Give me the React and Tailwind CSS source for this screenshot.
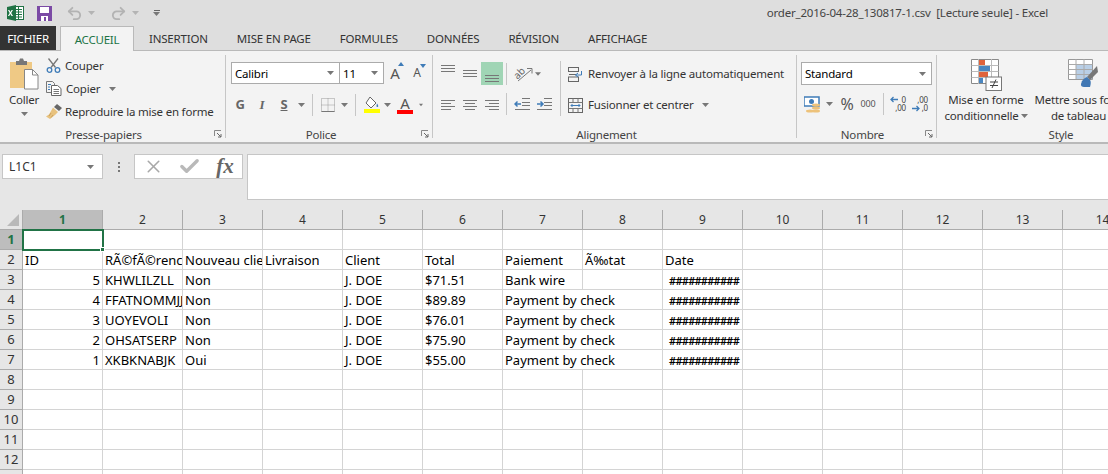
import { Undo2, Redo2, Check, X } from "lucide-react";

const tabs = ["INSERTION", "MISE EN PAGE", "FORMULES", "DONNÉES", "RÉVISION", "AFFICHAGE"];
const colNums = [1, 2, 3, 4, 5, 6, 7, 8, 9, 10, 11, 12, 13, 14];

const hash = "###########";
// [text, align, span]
const rows = {
	2: [["ID"], ["RÃ©fÃ©rence"], ["Nouveau client"], ["Livraison"], ["Client"], ["Total"], ["Paiement"], ["Ã‰tat"], ["Date"]],
	3: [["5", "r"], ["KHWLILZLL"], ["Non"], [""], ["J. DOE"], ["$71.51"], ["Bank wire"], [""], [hash, "h"]],
	4: [["4", "r"], ["FFATNOMMJJ"], ["Non"], [""], ["J. DOE"], ["$89.89"], ["Payment by check", "", 2], [hash, "h"]],
	5: [["3", "r"], ["UOYEVOLI"], ["Non"], [""], ["J. DOE"], ["$76.01"], ["Payment by check", "", 2], [hash, "h"]],
	6: [["2", "r"], ["OHSATSERP"], ["Non"], [""], ["J. DOE"], ["$75.90"], ["Payment by check", "", 2], [hash, "h"]],
	7: [["1", "r"], ["XKBKNABJK"], ["Oui"], [""], ["J. DOE"], ["$55.00"], ["Payment by check", "", 2], [hash, "h"]],
};

const Caret = ({ className = "" }) => (
	<svg width="7" height="4" viewBox="0 0 7 4" className={className}>
		<path d="M0 0h7L3.5 4z" fill="#777" />
	</svg>
);

const Launcher = () => (
	<svg width="8" height="8" viewBox="0 0 8 8" className="absolute right-[3px] bottom-[4px]">
		<path d="M.5 6V.5H7" fill="none" stroke="#888" />
		<path d="M3 3l4 4M7 4v3H4" fill="none" stroke="#666" />
	</svg>
);

const Sep = () => <div className="w-px bg-[#c6c6c6] my-[4px] shrink-0" />;
const MiniSep = () => <div className="w-px h-[22px] bg-[#c6c6c6] shrink-0" />;

const Slot = ({ w, children, className = "" }) => (
	<div className={`flex items-center justify-center shrink-0 ${className}`} style={{ width: w }}>
		{children}
	</div>
);

const Group = ({ width, label, labelClass = "", launcher, children }) => (
	<div className="relative flex flex-col shrink-0 h-full" style={{ width }}>
		<div className="flex-1 min-h-0">{children}</div>
		<div className={`h-[14px] flex items-center justify-center text-[#444] ${labelClass}`}>{label}</div>
		{launcher && <Launcher />}
	</div>
);

const Lines = ({ ys, x1 = 0, x2 = 14, h = 14 }) => (
	<svg width="14" height={h} viewBox={`0 0 14 ${h}`}>
		{ys.map((y, i) => (
			<path key={i} d={`M${Array.isArray(x1) ? x1[i] : x1} ${y + 0.5}H${Array.isArray(x2) ? x2[i] : x2}`} stroke="#777" />
		))}
	</svg>
);

const ExcelLogo = () => (
	<svg width="17" height="16" viewBox="0 0 17 16">
		<rect x="6" y="1.5" width="10.5" height="13" fill="#fff" stroke="#207245" />
		<path d="M9 4.5h6M9 7h6M9 9.5h6M9 12h6M11.5 2v12" stroke="#207245" />
		<path d="M0 2l9-2v16l-9-2z" fill="#207245" />
		<path d="M2.3 5l1.2 2 1.1-2h1.3L4.2 8l1.8 3H4.6L3.4 9l-1.2 2H.9l1.8-3L1 5z" fill="#fff" />
	</svg>
);

const SaveIcon = () => (
	<svg width="15" height="15" viewBox="0 0 15 15">
		<path d="M0 0h15v15H0z" fill="#7b4aa5" />
		<rect x="3" y="1" width="9" height="6" fill="#fff" />
		<rect x="4" y="10" width="7" height="5" fill="#fff" />
		<rect x="7" y="11" width="2" height="4" fill="#7b4aa5" />
	</svg>
);

const PasteIcon = () => (
	<svg width="29" height="32" viewBox="0 0 29 32">
		<path d="M0 4h22v26H0z" fill="#efc985" />
		<path d="M6 3h3l1-2.500h3l1 2.500h3v4H6z" fill="#777" />
		<path d="M14.500 11.500h8l5.500 5.500v14h-13.500z" fill="#fff" stroke="#888" />
		<path d="M22.500 11.500v5.500h5.500" fill="none" stroke="#888" />
	</svg>
);

const ScissorsIcon = () => (
	<svg width="15" height="15" viewBox="0 0 15 15" fill="none">
		<path d="M2.500 .5l7 9M12 .5l-7 9" stroke="#777" strokeWidth="1.300" />
		<circle cx="3.500" cy="12" r="2.300" stroke="#3f7cb8" strokeWidth="1.300" />
		<circle cx="11.500" cy="12" r="2.300" stroke="#3f7cb8" strokeWidth="1.300" />
	</svg>
);

const CopyIcon = () => (
	<svg width="16" height="15" viewBox="0 0 16 15" fill="none">
		<path d="M.5.5h6l2 2v9H.5z" fill="#f3f3f3" stroke="#777" />
		<path d="M5.500 4.500h6l3.500 3v7H5.500z" fill="#fff" stroke="#666" />
		<path d="M2 3.500h3M2 6h2M2 8.500h2" stroke="#3f7cb8" />
		<path d="M7.500 8.500h5.500M7.500 10.500h5.500M7.500 12.500h5.500" stroke="#777" />
	</svg>
);

const BrushIcon = () => (
	<svg width="16" height="15" viewBox="0 0 16 15">
		<path d="M11 0l5 4-3 3-5-4z" fill="#666" />
		<path d="M7 3.500l5 4.500-3 3-5 4-4-2.500 3-2z" fill="#e8c27e" />
		<path d="M5 9l-2 3M7 11l-2 2.500" stroke="#c9a25f" fill="none" />
	</svg>
);

const WrapIcon = () => (
	<svg width="15" height="15" viewBox="0 0 15 15" fill="none">
		<rect x=".5" y=".5" width="10" height="4" stroke="#666" />
		<rect x=".5" y="10" width="10" height="4.500" stroke="#666" />
		<path d="M1 7.500h7" stroke="#666" />
		<path d="M13.500 4v4h-6M10 6l-2.500 2 2.500 2" stroke="#3f7cb8" />
	</svg>
);

const MergeIcon = () => (
	<svg width="15" height="15" viewBox="0 0 15 15" fill="none">
		<rect x=".5" y=".5" width="14" height="14" stroke="#666" />
		<path d="M.5 4.500h14M.5 10.500h14M5 .5v4M10 .5v4M5 10.500v4M10 10.500v4" stroke="#777" />
		<path d="M3 7.500h9M4.500 6l-1.500 1.500L4.500 9M10.500 6L12 7.500 10.500 9" stroke="#3f7cb8" />
	</svg>
);

const OrientIcon = () => (
	<svg width="21" height="16" viewBox="0 0 21 16" fill="none">
		<text x="1" y="11" fontSize="10" fill="#666" transform="rotate(-45 6 8)">ab</text>
		<path d="M5 15l13-11" stroke="#777" />
		<path d="M14 2.500h5v5" stroke="#777" />
	</svg>
);

const IndentIcon = ({ flip }) => (
	<svg width="16" height="12" viewBox="0 0 16 12" fill="none">
		<path d="M8 .5h8M8 4.500h8M8 7.500h8M1 11.500h15" stroke="#777" />
		<path d={flip ? "M1 6h6M4.500 3.500L7 6 4.500 8.500" : "M1 6h6M3.500 3.500L1 6l2.500 2.500"} stroke="#3f7cb8" strokeWidth="1.500" />
	</svg>
);

const BorderIcon = () => (
	<svg width="14" height="14" viewBox="0 0 14 14" fill="none">
		<rect x=".5" y=".5" width="13" height="13" stroke="#999" strokeDasharray="1 1" />
		<path d="M7 .5v13M.5 7h13" stroke="#999" strokeDasharray="1 1" />
		<path d="M.5 13.500h13" stroke="#777" />
	</svg>
);

const FillIcon = () => (
	<svg width="16" height="17" viewBox="0 0 16 17" fill="none">
		<path d="M6 1l6 6-5 5-5-5z" fill="#fff" stroke="#666" />
		<path d="M13 7.500c1 1.500 2 3 .5 3.500s-1-2-.5-3.500z" fill="#3f7cb8" />
		<rect x="0" y="13" width="16" height="4" fill="#ffff00" />
	</svg>
);

const MoneyIcon = () => (
	<svg width="17" height="17" viewBox="0 0 17 17">
		<rect x="0" y="1" width="15" height="9" fill="#fff" stroke="#3f7cb8" strokeWidth="1.500" />
		<circle cx="7.500" cy="5.500" r="2.500" fill="#3f7cb8" />
		<ellipse cx="12" cy="9" rx="4" ry="1.500" fill="#edc27a" />
		<ellipse cx="12" cy="12" rx="4" ry="1.500" fill="#edc27a" />
		<ellipse cx="6" cy="15" rx="4" ry="1.500" fill="#edc27a" />
		<ellipse cx="12" cy="15" rx="4" ry="1.500" fill="#edc27a" />
	</svg>
);

const DecimalBtn = ({ up }) => (
	<div className="relative w-[16px] h-[16px] text-[8px] leading-[8px] text-[#444]">
		<span className="absolute top-0 right-0">{up ? "0" : ",00"}</span>
		<span className="absolute bottom-0 right-0">{up ? ",00" : ",0"}</span>
		<svg width="8" height="7" viewBox="0 0 8 7" className={`absolute left-0 ${up ? "top-0" : "bottom-0"}`} fill="none">
			<path d={up ? "M8 3.500H1M3.500 1L1 3.500 3.500 6" : "M0 3.500h7M4.500 1L7 3.500 4.500 6"} stroke="#3f7cb8" strokeWidth="1.300" />
		</svg>
	</div>
);

const CondFormatIcon = () => (
	<svg width="31" height="32" viewBox="0 0 31 32">
		<path d="M.5.5h27v24H.5z" fill="#fff" stroke="#8a8a8a" />
		<path d="M.5 6.500h27M.5 12.500h27M.5 18.500h27M7.500 0v25M20.500 0v25" stroke="#bbb" />
		<rect x="8" y="1" width="6" height="5" fill="#e0633b" />
		<rect x="8" y="7" width="11" height="5" fill="#4a86c0" />
		<rect x="8" y="13" width="9" height="5" fill="#e0633b" />
		<rect x="8" y="19" width="4" height="5" fill="#4a86c0" />
		<rect x="15" y="18" width="15.500" height="13.500" fill="#fff" stroke="#777" />
		<path d="M19 23h8M19 26.500h8M25 20.500l-4 8.500" stroke="#444" fill="none" />
	</svg>
);

const TableStyleIcon = () => (
	<svg width="30" height="30" viewBox="0 0 30 30">
		<path d="M.5.5h24v20H.5z" fill="#fff" stroke="#999" />
		<rect x="8" y="6" width="16" height="14" fill="#b9cfe6" />
		<path d="M.5 5.500h24M.5 10.500h24M.5 15.500h24M8 0v20M16 0v20" stroke="#aaa" />
		<path d="M29 7l-10 11 3 3 8-8z" fill="#777" />
		<path d="M19 18c-3 1-5 3-6 7-.5 2 1 3 3 3h6c1-3 1-6 0-7z" fill="#4178b4" />
	</svg>
);

const Ribbon = () => (
	<div className="h-[93px] bg-[#f3f3f3] border-b-2 border-[#b9b9b9] flex overflow-hidden text-[11.5px] tracking-[-0.2px]">
		<Group width={225} label="Presse-papiers" labelClass="pr-[18px]" launcher>
			<div className="flex h-full">
				<div className="w-[46px] flex flex-col items-center pt-[7px] pl-[2px]">
					<PasteIcon />
					<div className="text-[#333] mt-[1px] leading-[17px]">Coller</div>
					<Caret className="mt-[4px]" />
				</div>
				<div className="flex flex-col pt-[3px] text-[#333] whitespace-nowrap">
					<div className="h-[23px] flex items-center gap-[4px]"><ScissorsIcon /><span>Couper</span></div>
					<div className="h-[23px] flex items-center gap-[4px]"><CopyIcon /><span>Copier</span><Caret className="ml-[5px]" /></div>
					<div className="h-[23px] flex items-center gap-[3px]"><BrushIcon /><span>Reproduire la mise en forme</span></div>
				</div>
			</div>
		</Group>
		<Sep />
		<Group width={206} label="Police" labelClass="pr-[16px]" launcher>
			<div className="flex items-center pl-[5px] pt-[11px] text-black">
				<div className="w-[109px] h-[22px] bg-white border border-[#ababab] flex items-center justify-between px-[3px]">
					<span>Calibri</span><Caret className="mr-[2px]" />
				</div>
				<div className="w-[44px] h-[22px] bg-white border border-[#ababab] border-l-0 flex items-center justify-between px-[3px]">
					<span>11</span><Caret className="mr-[2px]" />
				</div>
				<Slot w={22} className="text-[15px] text-[#555] relative">
					A<svg width="6" height="4" viewBox="0 0 6 4" className="absolute right-[2px] top-0"><path d="M0 4l3-4 3 4z" fill="#3f7cb8" /></svg>
				</Slot>
				<Slot w={22} className="text-[12px] text-[#555] relative">
					A<svg width="6" height="4" viewBox="0 0 6 4" className="absolute right-[2px] top-0"><path d="M0 0l3 4 3-4z" fill="#3f7cb8" /></svg>
				</Slot>
			</div>
			<div className="flex items-center h-[22px] mt-[9px] pl-[3px] text-[13px] text-[#666]">
				<Slot w={22} className="font-bold">G</Slot>
				<Slot w={22} className="italic font-bold font-['Liberation_Serif']">I</Slot>
				<Slot w={22} className="underline font-bold">S</Slot>
				<Slot w={12}><Caret /></Slot>
				<Slot w={11}><MiniSep /></Slot>
				<Slot w={20}><BorderIcon /></Slot>
				<Slot w={12}><Caret /></Slot>
				<Slot w={10}><MiniSep /></Slot>
				<Slot w={23}><FillIcon /></Slot>
				<Slot w={8}><Caret /></Slot>
				<Slot w={28} className="relative text-[15px] text-[#555]">
					<div className="flex flex-col items-center leading-[14px]">
						<span>A</span>
						<div className="w-[16px] h-[4px] bg-[#ff0000]" />
					</div>
				</Slot>
				<Slot w={4}><Caret /></Slot>
			</div>
		</Group>
		<Sep />
		<Group width={363} label="Alignement" labelClass="pr-[16px]">
			<div className="flex">
				<div className="w-[109px] shrink-0 pl-[4px]">
					<div className="flex items-center h-[23px] mt-[11px]">
						<Slot w={22}><Lines h={18} ys={[0, 3, 6]} /></Slot>
						<Slot w={22}><Lines h={18} ys={[5, 8, 11]} /></Slot>
						<Slot w={22} className="h-[23px] bg-[#a0d5b5]"><Lines h={18} ys={[10, 13, 16]} /></Slot>
						<Slot w={7}><MiniSep /></Slot>
						<Slot w={24} className="ml-[1px]"><OrientIcon /></Slot>
						<Slot w={6}><Caret /></Slot>
					</div>
					<div className="flex items-center h-[22px] mt-[8px]">
						<Slot w={22}><Lines ys={[3, 6, 9, 12]} x2={[14, 10, 14, 10]} /></Slot>
						<Slot w={22}><Lines ys={[3, 6, 9, 12]} x1={[0, 2, 0, 2]} x2={[14, 12, 14, 12]} /></Slot>
						<Slot w={22}><Lines ys={[3, 6, 9, 12]} x1={[0, 4, 0, 4]} /></Slot>
						<Slot w={7}><MiniSep /></Slot>
						<Slot w={22} className="ml-[1px]"><IndentIcon /></Slot>
						<Slot w={22}><IndentIcon flip /></Slot>
					</div>
				</div>
				<div className="w-px h-[55px] mt-[10px] ml-[18px] bg-[#c6c6c6] shrink-0" />
				<div className="ml-[7px] pt-[12px] text-[#333] whitespace-nowrap">
					<div className="h-[22px] flex items-center gap-[5px]"><WrapIcon /><span>Renvoyer à la ligne automatiquement</span></div>
					<div className="h-[22px] mt-[9px] flex items-center gap-[5px]"><MergeIcon /><span>Fusionner et centrer</span><Caret className="ml-[3px]" /></div>
				</div>
			</div>
		</Group>
		<Sep />
		<Group width={139} label="Nombre" labelClass="pr-[8px]" launcher>
			<div className="pl-[4px] pt-[11px]">
				<div className="w-[131px] h-[23px] bg-white border border-[#ababab] flex items-center justify-between px-[3px] text-black">
					<span>Standard</span><Caret className="mr-[2px]" />
				</div>
			</div>
			<div className="flex items-center h-[22px] mt-[8px] pl-[7px] text-[#555]">
				<Slot w={17}><MoneyIcon /></Slot>
				<Slot w={17}><Caret /></Slot>
				<Slot w={18} className="text-[16px]">%</Slot>
				<Slot w={24} className="text-[9px]">000</Slot>
				<Slot w={7}><MiniSep /></Slot>
				<Slot w={22}><DecimalBtn up /></Slot>
				<Slot w={22}><DecimalBtn /></Slot>
			</div>
		</Group>
		<Sep />
		<Group width={171} label="Style" labelClass="pl-[77px]">
			<div className="flex text-[#333] leading-[16px] pt-[8px] whitespace-nowrap">
				<div className="w-[96px] shrink-0 flex flex-col items-center pl-[2px]">
					<CondFormatIcon />
					<div className="mt-[1px]">Mise en forme</div>
					<div className="flex items-center gap-[2px]">conditionnelle<Caret /></div>
				</div>
				<div className="flex flex-col items-center w-[100px] shrink-0">
					<TableStyleIcon />
					<div className="mt-[3px]">Mettre sous forme</div>
					<div className="flex items-center gap-[2px]">de tableau<Caret /></div>
				</div>
			</div>
		</Group>
	</div>
);

const FormulaBar = () => (
	<div className="h-[66px] bg-[#e6e6e6] flex pl-[2px] pt-[10px] shrink-0">
		<div className="w-[101px] h-[25px] bg-white border border-[#c6c6c6] flex items-center justify-between pl-[6px] pr-[8px] text-[12px] text-[#333]">
			<span>L1C1</span><Caret />
		</div>
		<div className="w-[31px] h-[25px] flex flex-col items-center justify-center gap-[2px]">
			<div className="w-[2px] h-[2px] bg-[#777]" />
			<div className="w-[2px] h-[2px] bg-[#777]" />
			<div className="w-[2px] h-[2px] bg-[#777]" />
		</div>
		<div className="w-[109px] h-[25px] bg-white border border-[#c6c6c6] flex items-center text-[#a8a8a8]">
			<Slot w={36}><X size={21} strokeWidth={1.800} /></Slot>
			<Slot w={37}><Check size={23} strokeWidth={3.500} className="text-[#b9b9b9]" /></Slot>
			<Slot w={34} className="text-[#666] text-[21px] italic font-bold font-['Liberation_Serif']">fx</Slot>
		</div>
		<div className="ml-[4px] flex-1 h-[46px] bg-white border border-[#c6c6c6] border-r-0" />
	</div>
);

const Cell = ({ cell }) => {
	const [text = "", align = "", span = 1] = cell || [];
	const alignClass = align === "r" ? "text-right text-[13px]" : align === "h" ? "text-right pr-[3px] text-[11px] font-semibold tracking-[-0.75px]" : "text-[13px]";
	return (
		<div
			className={`h-[20px] border-r border-b border-[#d4d4d4] overflow-hidden whitespace-nowrap leading-[19px] pt-[1px] pl-[2px] pr-[2px] text-black ${span === 2 ? "col-span-2" : ""} ${alignClass}`}
		>
			{text}
		</div>
	);
};

const Sheet = () => (
	<div className="grid grid-cols-[23px_repeat(14,80px)] w-[1108px] overflow-hidden">
		<div className="h-[20px] bg-[#e6e6e6] border-r border-b border-[#ababab] flex items-end justify-end p-[3px]">
			<svg width="12" height="12" viewBox="0 0 12 12"><path d="M12 0v12H0z" fill="#b9b9b9" /></svg>
		</div>
		{colNums.map((n) => (
			<div
				key={n}
				className={`h-[20px] border-b border-r flex items-center justify-center text-[12px] ${n === 1 ? "bg-[#bdbdbd] border-[#ababab] text-[#217346] font-bold" : "bg-[#e6e6e6] border-[#ababab] text-[#333]"}`}
			>
				{n}
			</div>
		))}
		{[1, 2, 3, 4, 5, 6, 7, 8, 9, 10, 11, 12, 13].map((r) => {
			const cells = rows[r] || [];
			const used = cells.reduce((sum, c) => sum + (c[2] || 1), 0);
			return [
				<div
					key={`h${r}`}
					className={`h-[20px] border-r border-b flex items-center justify-center text-[13px] ${r === 1 ? "bg-[#bdbdbd] border-[#ababab] text-[#217346] font-bold" : "bg-[#e6e6e6] border-[#ababab] text-[#333]"}`}
				>
					{r}
				</div>,
				...cells.map((c, i) => <Cell key={`${r}-${i}`} cell={c} />),
				...Array.from({ length: 14 - used }, (_, i) => <Cell key={`${r}-e${i}`} />),
			];
		})}
	</div>
);

const App = () => {
	return (
		<div className="relative w-[1108px] h-[474px] overflow-hidden bg-white font-['Noto_Sans',sans-serif]">
			<div className="h-[26px] bg-[#dedede] flex items-center relative">
				<div className="ml-[7px]"><ExcelLogo /></div>
				<div className="ml-[13px]"><SaveIcon /></div>
				<Undo2 size={17} strokeWidth={2.600} className="ml-[14px] text-[#b3b3b3]" />
				<Caret className="ml-[5px] opacity-40" />
				<Redo2 size={17} strokeWidth={2.600} className="ml-[15px] text-[#b3b3b3]" />
				<Caret className="ml-[5px] opacity-40" />
				<div className="ml-[14px] flex flex-col items-center gap-[1px]">
					<div className="w-[6px] h-px bg-[#666]" />
					<Caret />
				</div>
				<div className="ml-auto mr-[60px] text-[11.5px] tracking-[-0.2px] text-[#444] whitespace-pre">order_2016-04-28_130817-1.csv  [Lecture seule] - Excel</div>
			</div>
			<div className="h-[25px] bg-[#dedede] flex items-stretch text-[11.5px] tracking-[-0.2px] text-[#333] border-b border-[#b9b9b9] relative">
				<div className="w-[56px] bg-[#333333] text-white flex items-center justify-center pt-[1px]">FICHIER</div>
				<div className="ml-[4px] w-[74px] h-[25px] bg-[#f3f3f3] border border-b-0 border-[#b9b9b9] text-[#217346] flex items-center justify-center pt-[1px]">ACCUEIL</div>
				<div className="flex items-center pl-[15px] pt-[1px] gap-[29px]">
					{tabs.map((t) => <span key={t}>{t}</span>)}
				</div>
			</div>
			<Ribbon />
			<FormulaBar />
			<Sheet />
			<div className="absolute left-[22px] top-[229px] w-[82px] h-[22px] border-2 border-[#217346]">
				<div className="absolute right-[-3px] bottom-[-3px] w-[5px] h-[5px] bg-[#217346] border border-white" />
			</div>
		</div>
	);
};

export default App;
